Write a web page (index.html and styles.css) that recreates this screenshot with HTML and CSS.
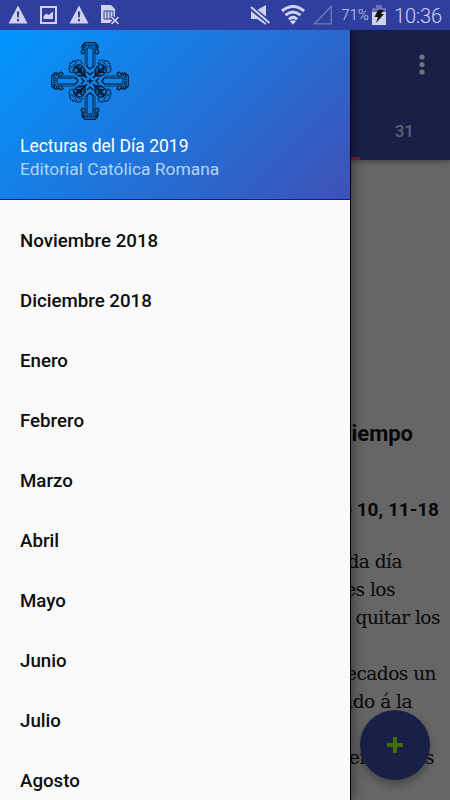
FILE: index.html
```html
<!DOCTYPE html>
<html lang="es">
<head>
  <meta charset="UTF-8">
  <meta name="viewport" content="width=device-width, initial-scale=1.0">
  <title>Lecturas del Día 2019</title>
  <link rel="stylesheet" href="styles.css">
</head>
<body>
  <div class="status-bar">
    <div class="status-icons">
      <svg class="warning" width="20" height="19" viewBox="0 0 20 19"><path d="M10 0.5L19.5 18.5H0.5Z" fill="#d0d1ea"/><path d="M8.8 6.5h2.5l-.5 6H9.3zM9 14h2v2.3H9z" fill="#303f9f"/></svg>
      <svg class="photo" width="17" height="18" viewBox="0 0 17 18"><path fill="#d0d1ea" fill-rule="evenodd" d="M0 0h17v18H0zM2 2v14h13V2z"/><path d="M3.5 13V10l3-2.5 2 1.5 4.5-3.5V13z" fill="#d0d1ea"/></svg>
      <svg class="warning" width="20" height="19" viewBox="0 0 20 19"><path d="M10 0.5L19.5 18.5H0.5Z" fill="#d0d1ea"/><path d="M8.8 6.5h2.5l-.5 6H9.3zM9 14h2v2.3H9z" fill="#303f9f"/></svg>
      <svg class="sim" width="19" height="20" viewBox="0 0 19 20"><path d="M0 0h10l4 4v14H0z" fill="#d0d1ea"/><path d="M3 6h9v8H3zM6 6v8M9 6v8" fill="none" stroke="#303f9f"/><path d="M10.5 12l7 7M17.5 12l-7 7" stroke="#303f9f" stroke-width="4"/><path d="M10.5 12l7 7M17.5 12l-7 7" stroke="#d0d1ea" stroke-width="1.7"/></svg>
    </div>
    <div class="status-system">
      <svg class="mute" width="21" height="20" viewBox="0 0 21 20"><path d="M1 5h6l9-5v20l-9-6H1z" fill="#d0d1ea"/><path d="M0 2l20 16" stroke="#303f9f" stroke-width="5"/><path d="M1 2l18.5 16" stroke="#d0d1ea" stroke-width="2"/></svg>
      <svg class="wifi" width="24" height="20" viewBox="0 0 24 20"><g fill="none" stroke="#d0d1ea" stroke-width="3"><path d="M1 6Q12-3 23 6M4.5 10.2Q12 3.7 19.5 10.2M8 14.3Q12 10.5 16 14.3"/></g><path d="M9 16.3q3-2.3 6 0l-3 3.5z" fill="#d0d1ea"/></svg>
      <svg class="signal" width="20" height="20" viewBox="0 0 20 20"><path d="M1.5 18.8L18.2 1.5V18.8Z" fill="none" stroke="#7179bd" stroke-width="1.3"/></svg>
      <span class="battery-level">71%</span>
      <svg class="battery" width="14" height="20" viewBox="0 0 14 20"><path d="M4 0h6v3h4v6H0V3h4z" fill="#6870b8"/><path d="M0 7h14v13H0z" fill="#d0d1ea"/><path d="M6 5h6L9 9h3l-8 9 2-6H2.5z" fill="#111"/></svg>
      <span class="clock">10:36</span>
    </div>
  </div>

  <div class="screen">
    <main class="page">
      <header class="app-bar">
        <svg class="more" width="6" height="22" viewBox="0 0 6 22"><g fill="#757575"><circle cx="3" cy="3" r="2.6"/><circle cx="3" cy="10.5" r="2.6"/><circle cx="3" cy="18" r="2.6"/></g></svg>
        <div class="tab">31</div>
        <div class="tab-indicator"></div>
      </header>
      <article class="reading">
        <h1>Tiempo</h1>
        <h2>o 10, 11-18</h2>
        <div class="reading-text">
          <p>da día</p>
          <p>es los</p>
          <p>quitar los</p>
          <p></p>
          <p>ecados un</p>
          <p>ndo á la</p>
          <p></p>
          <p>en dichos</p>
        </div>
      </article>
      <button class="fab">
        <svg width="18" height="18" viewBox="0 0 18 18"><path d="M7 1h4v6h6v4h-6v6H7v-6H1V7h6z" fill="#3f6c08"/></svg>
      </button>
    </main>

    <nav class="drawer">
      <div class="drawer-header">
        <svg class="cross" width="80" height="80" viewBox="-40 -40 80 80">
          <defs>
            <g id="arm" fill="none" stroke="#06182c">
              <path d="M-3-15V-33H3V-15" stroke-width="1"/>
              <path d="M-5-15V-31M5-15V-31" stroke-width="1" opacity=".75"/>
              <path d="M-4.5-29L-7.5-27L-9-29L-7.5-31L-8-35L-5-38.3H5L8-35L7.5-31L9-29L7.5-27L4.5-29" stroke-width="1.2"/>
              <path d="M-4.5-35.5H4.5M-6-36.5L-5.5-30M6-36.5L5.5-30" stroke-width="2.6" stroke-dasharray="1.6 .6" opacity=".85"/>
            </g>
            <g id="lobe" fill="none" stroke="#06182c">
              <path d="M8-17L9-20L12-21L15-20L17-20L20-17L20-15L21-12L20-9L17-8" stroke-width="1.3" stroke-dasharray="2 .8"/>
              <path d="M6-6V-13L9-16L13-16L16-13L16-9L13-6Z" stroke-width="1.2"/>
              <path d="M3-3L14-14M8-7L9-14M7-8L14-9" stroke-width="1.6"/>
              <path d="M10-18L17-10M13-19L19-13M7-15L15-7M9-11L11-9" stroke-width="1.4" stroke-dasharray="1 .9"/>
              <path d="M9-10L14-15L15-11L10-9Z" fill="#06182c" stroke="none" opacity=".8"/>
            </g>
          </defs>
          <use href="#lobe"/><use href="#lobe" transform="rotate(90)"/><use href="#lobe" transform="rotate(180)"/><use href="#lobe" transform="rotate(270)"/>
          <use href="#arm"/><use href="#arm" transform="rotate(90)"/><use href="#arm" transform="rotate(180)"/><use href="#arm" transform="rotate(270)"/>
          <path d="M-4-15L0-12L4-15M-4 15L0 12L4 15M-15-4L-12 0L-15 4M15-4L12 0L15 4M-3-9L0-6L3-9M-3 9L0 6L3 9M-9-3L-6 0L-9 3M9-3L6 0L9 3M-3 0H3M0-3V3M-5-12V-5H-12M5-12V-5H12M-5 12V5H-12M5 12V5H12" fill="none" stroke="#06182c" stroke-width="1.3"/>
        </svg>
        <div class="drawer-title">Lecturas del Día 2019</div>
        <div class="drawer-subtitle">Editorial Católica Romana</div>
      </div>
      <ul class="months">
        <li>Noviembre 2018</li>
        <li>Diciembre 2018</li>
        <li>Enero</li>
        <li>Febrero</li>
        <li>Marzo</li>
        <li>Abril</li>
        <li>Mayo</li>
        <li>Junio</li>
        <li>Julio</li>
        <li>Agosto</li>
      </ul>
    </nav>
  </div>
</body>
</html>
```
FILE: styles.css
```css
* {
  box-sizing: border-box;
}

body {
  width: 450px;
  height: 800px;
  margin: 0;
  overflow: hidden;
  background: #666;
  font-family: Roboto, sans-serif;
}

svg {
  display: block;
  flex: none;
}

.status-bar {
  height: 30px;
  display: flex;
  justify-content: space-between;
  padding: 5px 8px 0 8px;
  background: #303f9f;
  color: #d0d1ea;
}

.status-icons,
.status-system {
  display: flex;
}

.status-icons .photo {
  margin: 1px 12px 0 12px;
}

.status-icons .sim {
  margin-left: 12px;
}

.wifi {
  margin-left: 10px;
}

.signal {
  margin-left: 8px;
}

.battery-level {
  margin-left: 8px;
  font-size: 15px;
  font-weight: 300;
  line-height: 21px;
}

.battery {
  margin-left: 3px;
}

.clock {
  margin-left: 8px;
  font-size: 20px;
  font-weight: 300;
  line-height: 22px;
  letter-spacing: -0.1px;
}

.screen {
  position: relative;
  height: 770px;
  overflow: hidden;
}

.page {
  height: 770px;
}

.app-bar {
  height: 130px;
  display: flex;
  flex-direction: column;
  align-items: flex-end;
  padding-top: 24px;
  background: #192048;
  box-shadow: 0 2px 4px rgba(0, 0, 0, 0.3);
}

.more {
  margin-right: 25px;
}

.tab {
  margin: 44px 36px 0 0;
  color: #5d6079;
  font-size: 17px;
  font-weight: 500;
  line-height: 22px;
}

.tab-indicator {
  width: 20px;
  height: 3px;
  margin: 15px 90px 0 0;
  background: #7b1b3d;
}

.reading {
  padding: 260px 0 0 300px;
  color: #080808;
  white-space: nowrap;
}

.reading h1,
.reading h2 {
  margin: 0;
  text-align: right;
}

.reading h1 {
  padding-right: 37px;
  font-size: 22px;
  line-height: 28px;
}

.reading h2 {
  margin-top: 50px;
  padding-right: 11px;
  font-size: 19px;
  line-height: 24px;
}

.reading-text {
  margin-top: 26px;
  font-family: "DejaVu Serif", serif;
  font-size: 18.5px;
  letter-spacing: -0.5px;
}

.reading-text p {
  height: 28px;
  margin: 0;
  line-height: 28px;
  text-align: right;
  padding-right: 16px;
}

.reading-text p:nth-child(1) {
  padding-right: 48px;
}

.reading-text p:nth-child(2) {
  padding-right: 55px;
}

.reading-text p:nth-child(3) {
  padding-right: 10px;
}

.reading-text p:nth-child(5) {
  padding-right: 14px;
}

.reading-text p:nth-child(6) {
  padding-right: 38px;
}

.fab {
  position: absolute;
  right: 20px;
  bottom: 20px;
  width: 70px;
  height: 70px;
  display: flex;
  align-items: center;
  justify-content: center;
  border: none;
  border-radius: 50%;
  background: #192048;
  box-shadow: 0 5px 8px rgba(0, 0, 0, 0.3);
}

.drawer {
  position: absolute;
  top: 0;
  left: 0;
  width: 350px;
  height: 770px;
  background: #fafafa;
  box-shadow: 1px 0 0 #000, 2px 0 12px rgba(0, 0, 0, 0.5);
}

.drawer-header {
  height: 170px;
  padding: 11px 20px 0;
  border-bottom: 1px solid #0020a8;
  background: linear-gradient(135deg, #0097ff 0%, #3f51b5 100%);
  font-size: 17.5px;
  line-height: 24px;
}

.cross {
  margin-left: 30px;
}

.drawer-title {
  margin-top: 13px;
  color: #fff;
}

.drawer-subtitle {
  color: #b3d4f7;
  font-size: 17.4px;
  line-height: 22px;
}

.months {
  margin: 0;
  padding: 11px 0 0;
  list-style: none;
}

.months li {
  height: 60px;
  padding-left: 20px;
  color: #0d0d0d;
  font-size: 18.7px;
  font-weight: 500;
  line-height: 60px;
}
```
